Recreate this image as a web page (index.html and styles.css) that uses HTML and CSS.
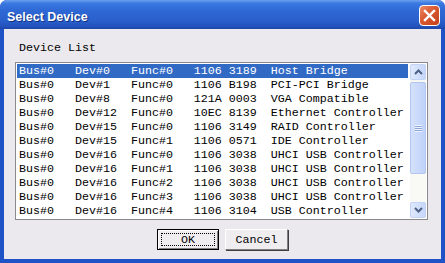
FILE: index.html
```html
<!DOCTYPE html>
<html lang="en">
<head>
    <meta charset="UTF-8">
    <title>Select Device</title>
    <link rel="stylesheet" href="styles.css">
</head>
<body>
    <div class="window">
        <!-- Title bar -->
        <div class="titlebar">
            <span class="title">Select Device</span>
            <button class="close" aria-label="Close">
                <svg width="13" height="13" viewBox="0 0 13 13">
                    <path d="M2 2 L11 11 M11 2 L2 11" stroke="#fff" stroke-width="2.4" stroke-linecap="square"/>
                </svg>
            </button>
        </div>

        <div class="body">
            <div class="label">Device List</div>

            <div class="listbox">
                <div class="rows">
                    <div class="row selected"><span>Bus#0</span><span>Dev#0</span><span>Func#0</span><span>1106</span><span>3189</span><span>Host Bridge</span></div>
                    <div class="row"><span>Bus#0</span><span>Dev#1</span><span>Func#0</span><span>1106</span><span>B198</span><span>PCI-PCI Bridge</span></div>
                    <div class="row"><span>Bus#0</span><span>Dev#8</span><span>Func#0</span><span>121A</span><span>0003</span><span>VGA Compatible</span></div>
                    <div class="row"><span>Bus#0</span><span>Dev#12</span><span>Func#0</span><span>10EC</span><span>8139</span><span>Ethernet Controller</span></div>
                    <div class="row"><span>Bus#0</span><span>Dev#15</span><span>Func#0</span><span>1106</span><span>3149</span><span>RAID Controller</span></div>
                    <div class="row"><span>Bus#0</span><span>Dev#15</span><span>Func#1</span><span>1106</span><span>0571</span><span>IDE Controller</span></div>
                    <div class="row"><span>Bus#0</span><span>Dev#16</span><span>Func#0</span><span>1106</span><span>3038</span><span>UHCI USB Controller</span></div>
                    <div class="row"><span>Bus#0</span><span>Dev#16</span><span>Func#1</span><span>1106</span><span>3038</span><span>UHCI USB Controller</span></div>
                    <div class="row"><span>Bus#0</span><span>Dev#16</span><span>Func#2</span><span>1106</span><span>3038</span><span>UHCI USB Controller</span></div>
                    <div class="row"><span>Bus#0</span><span>Dev#16</span><span>Func#3</span><span>1106</span><span>3038</span><span>UHCI USB Controller</span></div>
                    <div class="row"><span>Bus#0</span><span>Dev#16</span><span>Func#4</span><span>1106</span><span>3104</span><span>USB Controller</span></div>
                </div>

                <!-- Scrollbar -->
                <div class="scrollbar">
                    <div class="arrow">
                        <svg width="9" height="6" viewBox="0 0 9 6"><path d="M1 5 L4.5 1.5 L8 5" stroke="#4d6185" stroke-width="2" fill="none"/></svg>
                    </div>
                    <div class="thumb"><div class="grip"></div></div>
                    <div class="track"></div>
                    <div class="arrow">
                        <svg width="9" height="6" viewBox="0 0 9 6"><path d="M1 1 L4.5 4.5 L8 1" stroke="#4d6185" stroke-width="2" fill="none"/></svg>
                    </div>
                </div>
            </div>

            <div class="buttons">
                <button class="btn default"><span class="focus">OK</span></button>
                <button class="btn">Cancel</button>
            </div>
        </div>
    </div>
</body>
</html>
```
FILE: styles.css
```css
body {
    margin: 0;
    background: #fff;
    font-family: 'Liberation Mono', monospace;
    font-size: 11.67px;
}

.window {
    width: 445px;
    height: 263px;
    display: flex;
    flex-direction: column;
    box-sizing: border-box;
    border-radius: 7px 7px 0 0;
    background: #1f52c7;
    overflow: hidden;
}

.titlebar {
    height: 29px;
    display: flex;
    align-items: center;
    justify-content: space-between;
    padding: 0 5px 0 7px;
    background: linear-gradient(#6aa0ee 0, #3a78e0 12%, #2f69d6 35%, #2a60cc 70%, #2353bd 90%, #1d47a8 100%);
}

.title {
    font-family: 'Liberation Sans', sans-serif;
    font-weight: bold;
    font-size: 12.5px;
    color: #fff;
    text-shadow: 1px 1px #0f2f80;
    margin-top: 4px;
}

.close {
    width: 21px;
    height: 21px;
    margin-top: 2px;
    padding: 0;
    border: 1px solid #fff;
    border-radius: 4px;
    background: linear-gradient(135deg, #e98a66 0, #d9582f 45%, #c4411b 100%);
    display: flex;
    align-items: center;
    justify-content: center;
}

.body {
    flex: 1;
    margin: 0 4px 4px 4px;
    background: #ebe9ed;
    padding: 12px 13px 9px 11px;
    display: flex;
    flex-direction: column;
}

.label {
    line-height: 14px;
    padding-left: 4px;
    color: #000;
}

.listbox {
    margin-top: 7px;
    height: 158px;
    box-sizing: border-box;
    border: 1px solid #8a8a8e;
    background: #fff;
    display: flex;
    padding: 1px;
}

.rows {
    flex: 1;
    margin-right: 2px;
}

.row {
    display: grid;
    grid-template-columns: 8ch 8ch 9ch 5ch 6ch auto;
    height: 14px;
    line-height: 14px;
    padding-left: 2px;
    color: #000;
    white-space: pre;
}

.row.selected {
    background: #316ac5;
    color: #fff;
}

.scrollbar {
    width: 16px;
    display: flex;
    flex-direction: column;
    background: #f6f6f3;
}

.arrow {
    height: 16px;
    box-sizing: border-box;
    border: 1px solid #c3d3f5;
    border-radius: 2px;
    background: linear-gradient(to right, #dfe9fd, #c6d7fb);
    display: flex;
    align-items: center;
    justify-content: center;
}

.thumb {
    height: 92px;
    margin-top: 2px;
    box-sizing: border-box;
    border: 1px solid #b2c6ef;
    border-radius: 2px;
    background: linear-gradient(to right, #d4e1fc, #c0d2fa);
    display: flex;
    align-items: center;
    justify-content: center;
}

.grip {
    width: 7px;
    height: 7px;
    background: repeating-linear-gradient(#eef3fe 0, #eef3fe 1px, #8da6d8 1px, #8da6d8 2px);
}

.track {
    flex: 1;
    background: #f9f9f6;
}

.buttons {
    margin-top: 9px;
    display: flex;
    justify-content: center;
    gap: 6px;
    padding-left: 2px;
}

.btn {
    width: 63px;
    height: 21px;
    padding: 0;
    font-family: 'Liberation Mono', monospace;
    font-size: 11.67px;
    color: #000;
    background: #efedf0;
    border: 1px solid;
    border-color: #fff #808080 #808080 #fff;
    box-shadow: 1px 1px #404040;
}

.btn.default {
    width: 62px;
    border: 1px solid #000;
    box-shadow: inset 1px 1px #fff, inset -1px -1px #808080;
    display: flex;
    padding: 3px;
}

.focus {
    flex: 1;
    border: 1px dotted #000;
    display: flex;
    align-items: center;
    justify-content: center;
}
```
